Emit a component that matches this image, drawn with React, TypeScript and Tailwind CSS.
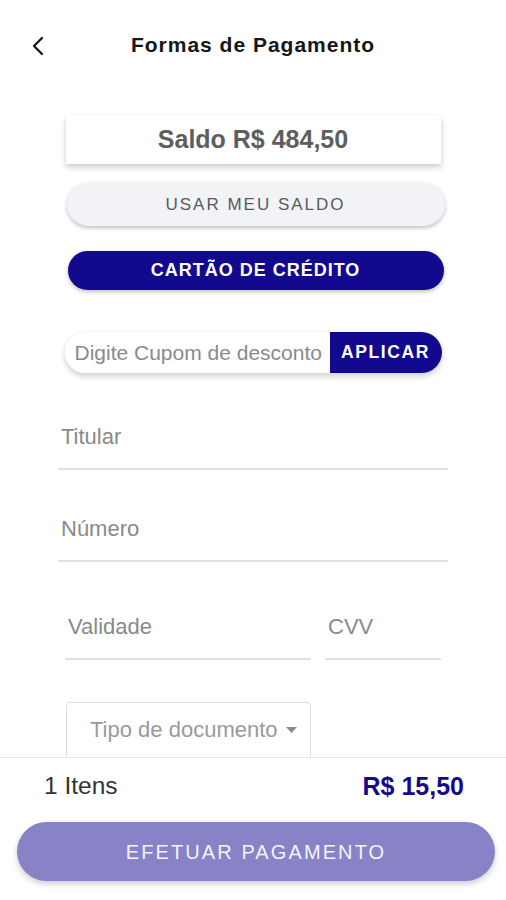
import React from "react";

const navy = "bg-[#13098f]";

const UnderlineField: React.FC<{ label: string; className?: string }> = ({ label, className }) => {
  return (
    <div className={`flex flex-col ${className ?? ""}`}>
      <p className="px-[3px] text-[22px] leading-[26px] text-[#8a8a8a]">{label}</p>
      <div className="mt-[18px] h-[2px] bg-[#e0e0e0]" />
    </div>
  );
};

const App: React.FC = () => {
  return (
    <div className="flex h-[900px] w-[506px] flex-col overflow-hidden bg-white font-['Liberation_Sans',Arial,sans-serif]">
      <div className="flex-1 overflow-hidden">
        <header className="relative flex h-[90px] items-center justify-center">
          <svg
            className="absolute left-[29px] top-[36px]"
            width="18"
            height="20"
            viewBox="0 0 18 20"
            fill="none"
            stroke="#111"
            strokeWidth="2.2"
            strokeLinecap="round"
            strokeLinejoin="round"
          >
            <path d="M13 2 L5 10 L13 18" />
          </svg>
          <h1 className="text-[21px] font-bold tracking-[1px] text-[#161616]">Formas de Pagamento</h1>
        </header>

        <div className="flex flex-col items-center">
          <div className="mt-[26px] flex h-[48px] w-[375px] items-center justify-center bg-white shadow-[0_3px_6px_rgba(0,0,0,0.22)]">
            <span className="text-[25px] font-bold text-[#5e5e5e]">Saldo R$ 484,50</span>
          </div>

          <button className="ml-[5px] mt-[19px] flex h-[43px] w-[378px] items-center justify-center rounded-full bg-[#f2f3f7] shadow-[0_2px_4px_rgba(0,0,0,0.25)]">
            <span className="text-[17px] tracking-[2px] text-[#5a5a5a]">USAR MEU SALDO</span>
          </button>

          <button
            className={`ml-[5px] mt-[25px] flex h-[39px] w-[376px] items-center justify-center rounded-full ${navy} shadow-[0_2px_4px_rgba(0,0,0,0.25)]`}
          >
            <span className="text-[18px] font-bold tracking-[1px] text-white">CARTÃO DE CRÉDITO</span>
          </button>

          <div className="mt-[42px] flex h-[41px] w-[377px] rounded-full shadow-[0_3px_6px_rgba(0,0,0,0.2)]">
            <div className="flex flex-1 items-center rounded-l-full bg-white pl-[10px]">
              <span className="whitespace-nowrap text-[21px] text-[#8a8a8a]">Digite Cupom de desconto</span>
            </div>
            <button className={`flex w-[112px] items-center justify-center rounded-r-full ${navy}`}>
              <span className="text-[17.5px] font-bold tracking-[1.6px] text-white">APLICAR</span>
            </button>
          </div>
        </div>

        <div className="mt-[51px] flex flex-col px-[58px]">
          <UnderlineField label="Titular" />
          <UnderlineField label="Número" className="mt-[46px]" />
          <div className="mt-[52px] flex gap-[14px] pl-[7px] pr-[7px]">
            <UnderlineField label="Validade" className="w-[246px]" />
            <UnderlineField label="CVV" className="flex-1" />
          </div>
          <div className="mt-[42px] pl-[8px]">
            <div className="flex h-[64px] w-[245px] items-start rounded-[4px] border border-[#dcdcdc] pl-[23px] pt-[14px]">
              <span className="whitespace-nowrap text-[22px] leading-[26px] text-[#9a9a9a]">Tipo de documento</span>
              <svg className="ml-[8px] mt-[10px]" width="11" height="6" viewBox="0 0 11 6">
                <path d="M0 0 L11 0 L5.5 6 Z" fill="#8a8a8a" />
              </svg>
            </div>
          </div>
        </div>
      </div>

      <footer className="flex h-[143px] flex-col border-t border-[#e6e6e6] bg-white">
        <div className="flex items-center justify-between pl-[44px] pr-[42px] pt-[13px]">
          <span className="text-[24.5px] leading-[30px] text-[#333]">1 Itens</span>
          <span className="text-[25px] font-bold leading-[30px] text-[#13098f]">R$ 15,50</span>
        </div>
        <div className="ml-[17px] mr-[11px] mt-[21px]">
          <button className="flex h-[59px] w-full items-center justify-center rounded-full bg-[#8882c6] shadow-[0_3px_6px_rgba(0,0,0,0.2)]">
            <span className="text-[20px] tracking-[2.1px] text-[#f4f3fb]">EFETUAR PAGAMENTO</span>
          </button>
        </div>
      </footer>
    </div>
  );
};

export default App;
